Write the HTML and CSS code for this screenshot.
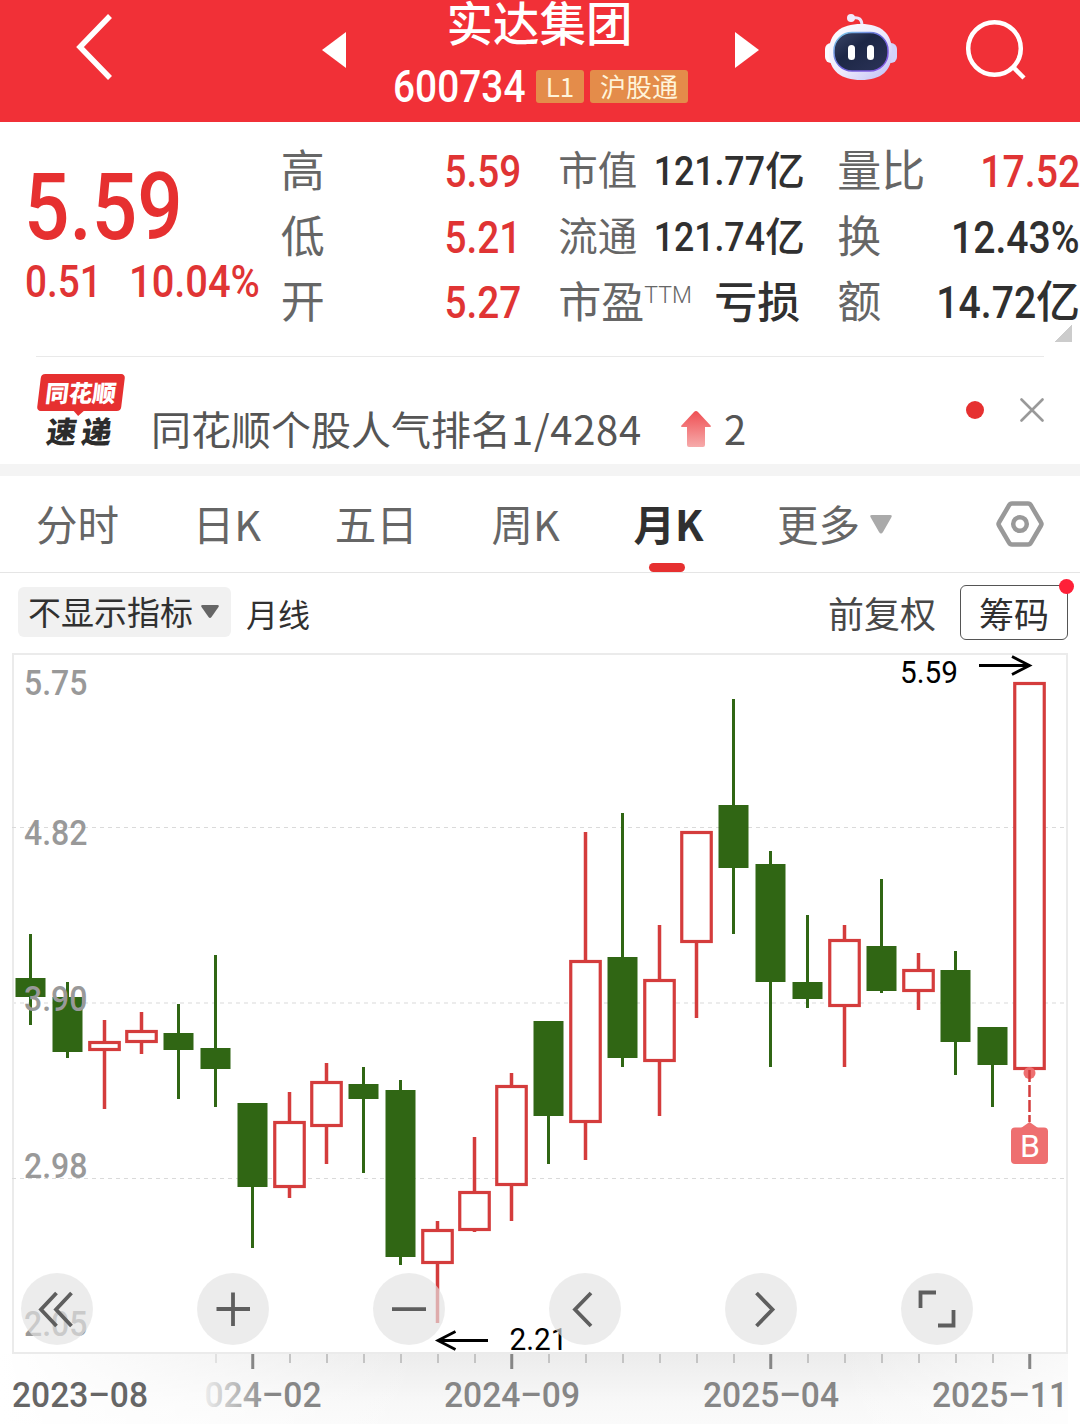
FILE: index.html
```html
<!DOCTYPE html>
<html lang="zh-CN">
<head>
<meta charset="utf-8">
<title>实达集团 600734</title>
<link rel="stylesheet" href="styles.css">
</head>
<body>
<header class="topbar">
  <svg class="back" width="44" height="72" viewBox="0 0 44 72" fill="none" stroke="#fff" stroke-width="5.5"><path d="M38 5 8 36l30 31"/></svg>
  <svg class="prev" width="24" height="36" viewBox="0 0 24 36" fill="#fff"><path d="M24 0v36L0 18z"/></svg>
  <div class="stock">
    <h1>实达集团</h1>
    <div class="code-row">
      <span class="code"><span class="din">600734</span></span>
      <span class="tag tag-l1">L1</span>
      <span class="tag tag-hk">沪股通</span>
    </div>
  </div>
  <svg class="next" width="24" height="36" viewBox="0 0 24 36" fill="#fff"><path d="M0 0v36l24-18z"/></svg>
  <svg class="robot" width="74" height="70" viewBox="824 12 74 70">
    <defs>
      <linearGradient id="shell" x1="0" y1="0" x2="1" y2="1"><stop offset="0" stop-color="#fff"/><stop offset=".55" stop-color="#ece9fc"/><stop offset="1" stop-color="#bcbcf4"/></linearGradient>
      <linearGradient id="rim" x1="0" y1="0" x2="1" y2="1"><stop offset="0" stop-color="#7fd6ec"/><stop offset=".5" stop-color="#6a62d8"/><stop offset="1" stop-color="#8a58e6"/></linearGradient>
      <linearGradient id="visor" x1="0" y1="0" x2="1" y2="1"><stop offset="0" stop-color="#3a4668"/><stop offset=".4" stop-color="#1d2746"/><stop offset="1" stop-color="#2b3358"/></linearGradient>
    </defs>
    <path d="M853 18c6-1 9 1 9 8" fill="none" stroke="#ece4fa" stroke-width="3"/>
    <circle cx="851" cy="18" r="4" fill="#f1eafc"/>
    <rect x="825" y="43" width="12" height="20" rx="6" fill="#fbfaff"/>
    <rect x="885" y="43" width="12" height="20" rx="6" fill="#d3d3fa"/>
    <path d="M861 24c20 0 31 9 31 28s-11 28-31 28-32-9-32-28 12-28 32-28z" fill="url(#shell)"/>
    <rect x="834" y="32.500" width="54" height="38.500" rx="18" fill="url(#visor)" stroke="url(#rim)" stroke-width="1.500"/>
    <rect x="848" y="45" width="7" height="15" rx="3.500" fill="#fff"/>
    <rect x="867" y="45" width="7" height="15" rx="3.500" fill="#fff"/>
  </svg>
  <svg class="search" width="62" height="62" viewBox="964 18 62 62" fill="none" stroke="#fff" stroke-width="4.500"><circle cx="994.500" cy="48.500" r="26.300"/><path d="m1013 67 11 11"/></svg>
</header>

<section class="quote">
  <div class="price">
    <div class="last"><span class="din">5.59</span></div>
    <div class="change"><span class="diff"><span class="din">0.51</span></span><span class="pct"><span class="din">10.04%</span></span></div>
  </div>
  <dl class="stats stats-a">
    <div><dt>高</dt><dd class="up"><span class="din">5.59</span></dd></div>
    <div><dt>低</dt><dd class="up"><span class="din">5.21</span></dd></div>
    <div><dt>开</dt><dd class="up"><span class="din">5.27</span></dd></div>
  </dl>
  <dl class="stats stats-b">
    <div><dt>市值</dt><dd><span class="din">121.77</span>亿</dd></div>
    <div><dt>流通</dt><dd><span class="din">121.74</span>亿</dd></div>
    <div class="pe"><dt>市盈<sup>TTM</sup></dt><dd>亏损</dd></div>
  </dl>
  <dl class="stats stats-c">
    <div><dt>量比</dt><dd class="up"><span class="din">17.52</span></dd></div>
    <div><dt>换</dt><dd><span class="din">12.43%</span></dd></div>
    <div><dt>额</dt><dd><span class="din">14.72</span>亿</dd></div>
  </dl>
  <i class="fold"></i>
</section>

<section class="news">
  <div class="logo">
    <span class="logo-top"><b>同花顺</b></span>
    <span class="logo-bottom">速递</span>
  </div>
  <p>同花顺个股人气排名<span class="place">1/4284</span></p>
  <svg class="rise" width="30" height="36" viewBox="0 0 30 36"><defs><linearGradient id="rise" x2="0" y2="1"><stop stop-color="#ef4f53"/><stop offset="1" stop-color="#f6abab"/></linearGradient></defs><path d="M15 0q1 0 2 1l13 14q0 1-1 1h-5v18q0 2-2 2H8q-2 0-2-2V16H1q-1 0-1-1L13 1q1-1 2-1z" fill="url(#rise)"/></svg>
  <span class="rank">2</span>
  <i class="unread"></i>
  <svg class="close" width="24" height="24" viewBox="0 0 24 24" stroke="#999" stroke-width="2.600" stroke-linecap="round"><path d="m1.500 1.500 21 21m0-21-21 21"/></svg>
</section>

<nav class="tabs">
  <a>分时</a><a>日K</a><a>五日</a><a>周K</a><a class="active">月K</a>
  <a class="more">更多<svg width="22" height="19" viewBox="0 0 22 19" fill="#aaa"><path d="M2 0h18q3 0 1 3l-8 14q-2 3-4 0L1 3q-2-3 1-3z"/></svg></a>
  <svg class="gear" width="48" height="46" viewBox="0 0 48 46" fill="none" stroke="#999"><path d="M16 2.500h16q2 0 3 2l10 17q1 1.500 0 3l-10 17q-1 2-3 2H16q-2 0-3-2L3 24.500q-1-1.500 0-3l10-17q1-2 3-2z" stroke-width="4.500"/><circle cx="24" cy="23" r="6.800" stroke-width="4.500"/></svg>
</nav>

<div class="toolbar">
  <span class="indicator">不显示指标<svg width="18" height="13" viewBox="0 0 18 13" fill="#666"><path d="M1.500 0h15q2 0 1 2l-7 10q-1.500 2-3 0l-7-10q-1-2 1-2z"/></svg></span>
  <span class="period">月线</span>
  <span class="adjust">前复权</span>
  <span class="chips">筹码</span>
</div>

<svg class="chart" width="1080" height="775" viewBox="0 649 1080 775">
  <defs>
    <linearGradient id="axisV" x2="0" y2="1"><stop stop-color="#ececec"/><stop offset=".7" stop-color="#f8f8f8"/><stop offset="1" stop-color="#fafafa"/></linearGradient>
    <linearGradient id="axisL"><stop stop-color="#fff"/><stop offset="1" stop-color="#fff" stop-opacity="0"/></linearGradient>
    <linearGradient id="axisR"><stop stop-color="#fff" stop-opacity="0"/><stop offset="1" stop-color="#fff" stop-opacity=".7"/></linearGradient>
    <linearGradient id="fade" gradientUnits="userSpaceOnUse" x1="200" x2="270" y1="0" y2="0"><stop stop-color="#f4f4f4"/><stop offset="1" stop-color="#868686"/></linearGradient>
  </defs>
  <rect x="0" y="1354" width="1068" height="70" fill="url(#axisV)"/>
  <rect x="0" y="1354" width="420" height="70" fill="url(#axisL)"/>
  <rect x="840" y="1354" width="228" height="70" fill="url(#axisR)"/>
  <rect x="13" y="654" width="1054" height="699" fill="none" stroke="#ebebeb" stroke-width="2"/>
  <g class="grid"><path d="M12 827.500h1055"/><path d="M12 1003h1055" class="soft"/><path d="M12 1178.500h1055"/></g>
  <g id="candles"></g>
  <g class="scale">
    <text x="24" y="695" textLength="63.500">5.75</text>
    <text x="24" y="845" textLength="63.500">4.82</text>
    <text x="24" y="1011" textLength="63.500">3.90</text>
    <text x="24" y="1178" textLength="63.500">2.98</text>
    <text x="24" y="1336" textLength="63.500">2.05</text>
  </g>
  <g class="extreme">
    <text x="900" y="683" textLength="58">5.59</text>
    <path d="M979 665.500h50M1012 656.500l17.500 9-17.500 9"/>
    <text x="509.500" y="1350" textLength="58">2.21</text>
    <path d="M488 1340.500h-49M455.500 1331.500l-17.500 9 17.500 9"/>
  </g>
  <g class="buy">
    <circle cx="1029.500" cy="1073" r="6"/>
    <path class="lead" d="M1029.500 1070v52"/>
    <path d="m1021 1128 8.500-6 8.500 6z"/>
    <rect x="1011" y="1127.500" width="37" height="36.500" rx="4"/>
    <text x="1030" y="1157" text-anchor="middle">B</text>
  </g>
  <g class="controls">
    <circle cx="57" cy="1309" r="36"/><circle cx="233" cy="1309" r="36"/><circle cx="409" cy="1309" r="36"/>
    <circle cx="585" cy="1309" r="36"/><circle cx="761" cy="1309" r="36"/><circle cx="937" cy="1309" r="36"/>
    <path d="M56.500 1293 41 1309.500l15.500 16.500M71.500 1293 56 1309.500l15.500 16.500"/>
    <path d="M216.500 1309h33.500M233 1292.500v33.500"/>
    <path d="M392 1309.200h34"/>
    <path d="M591 1293l-16 16.500 16 16.500"/>
    <path d="M756.500 1293l16 16.500-16 16.500"/>
    <path d="M936 1292.500h-15.500v15.500M938 1325.500h15.500v-15.500"/>
  </g>
  <g id="ticks"></g>
  <g class="dates">
    <text x="12" y="1407" textLength="136" fill="#666">2023–08</text>
    <text x="204.500" y="1407" textLength="117" fill="url(#fade)">024–02</text>
    <text x="444" y="1407" textLength="136">2024–09</text>
    <text x="703" y="1407" textLength="136">2025–04</text>
    <text x="932" y="1407" textLength="136">2025–11</text>
  </g>
</svg>
<script src="chart.js"></script>
</body>
</html>
```
FILE: styles.css
```css
* { box-sizing: border-box; }
body {
  margin: 0;
  width: 1080px;
  height: 1424px;
  overflow: hidden;
  background: #fff;
  color: #303030;
  font-family: Roboto, "Noto Sans CJK SC", sans-serif;
}
h1, p, dl, dd { margin: 0; font-weight: 400; }
svg { display: block; flex: none; }
.din { display: inline-block; font-family: Roboto, sans-serif; font-weight: 500; font-kerning: none; transform: scaleX(.88); transform-origin: right; }

.topbar { display: flex; height: 122px; background: #f13037; color: #fff; }
.back { margin: 11px 0 0 72px; }
.prev { margin: 32px 0 0 206px; }
.stock { width: 390px; height: 122px; display: flex; flex-direction: column; align-items: center; }
.stock h1 { height: 62px; margin-top: -11px; margin-right: 3px; font: 500 46.500px/64px "Noto Sans CJK SC", sans-serif; }
.code-row { display: flex; align-items: center; width: 296px; height: 34px; margin-top: 18px; }
.code { width: 132px; font-size: 43.500px; line-height: 34px; margin-top: 4px; }
.code .din { transform: scaleX(.893); transform-origin: left; }
.tag { height: 33px; border-radius: 3px; background: #e48c4a; color: #fff4da; text-align: center; font: 26px/31px "Noto Sans CJK SC", sans-serif; }
.tag-l1 { width: 48px; margin-left: 11px; }
.tag-hk { width: 98px; margin-left: 6px; }
.next { margin: 32px 0 0 -1px; }
.robot { margin: 12px 0 0 65px; }
.search { margin: 18px 0 0 66px; }

.quote { position: relative; display: flex; height: 234px; padding-top: 13px; }
.up, .price { color: #e03434; }
.price { width: 281px; }
.last { height: 100px; margin: 22px 0 0 24px; font-size: 93px; line-height: 102px; color: #e63030; }
.last .din { transform: scaleX(.86); transform-origin: left; }
.change { display: flex; padding-left: 25px; font-size: 44px; line-height: 50px; }
.change .din { transform-origin: left; }
.diff { width: 104px; }
.pct .din { transform: scaleX(.905); }
.stats > div { display: flex; justify-content: space-between; align-items: baseline; height: 65.500px; line-height: 66px; font-size: 44px; white-space: nowrap; }
.stats dt { color: #666; font-family: "Noto Sans CJK SC", sans-serif; }
.stats dd { font-weight: 500; }
.stats-a { width: 241px; }
.stats-b { width: 243px; margin-left: 37px; }
.stats-b > div { font-size: 39.500px; }
.stats-b dd { margin-right: 5px; }
.stats-b .din { font-size: 41px; transform: scaleX(.87); }
.stats-b .pe { font-size: 43px; }
.stats-b .pe dd { margin-right: 1px; }
.stats-b sup { font: 300 23px/20px Roboto, sans-serif; vertical-align: 15px; }
.stats-c { width: 243px; margin-left: 36px; }
.stats-c .din { transform: scaleX(.89); }
.fold { position: absolute; right: 8px; bottom: 14px; width: 18px; height: 18px; background: linear-gradient(135deg, transparent 50%, #ccc 50%); }

.news { position: relative; display: flex; height: 120px; border-bottom: 12px solid #f4f4f4; }
.news::before { content: ""; position: absolute; left: 36px; right: 36px; top: 0; height: 1px; background: #e9e9e9; }
.logo { width: 89px; margin: 18px 0 0 37px; display: flex; flex-direction: column; font-family: "Noto Sans CJK SC", sans-serif; font-weight: 900; }
.logo-top { position: relative; width: 84px; height: 37px; margin-left: 2px; border-radius: 4px; background: #e63030; color: #fff; transform: skewX(-7deg); text-align: center; font-size: 23.500px; line-height: 37px; }
.logo-top::after { content: ""; position: absolute; left: 36px; top: 36px; border: 6px solid transparent; border-top-color: #e63030; border-bottom: 0; }
.logo-top b { font-weight: 900; }
.logo-bottom { margin: 3px 0 0 10px; color: #2c2c2c; font-size: 30px; line-height: 32px; letter-spacing: 5px; white-space: nowrap; transform: skewX(-8deg); }
.news p, .rank { font: 40px/60px "Noto Sans CJK SC", sans-serif; color: #555; }
.news p { width: 490px; margin: 42px 0 0 25px; white-space: nowrap; }
.place { letter-spacing: .7px; }
.rise { margin: 55px 0 0 40px; }
.rank { margin: 42px 0 0 13px; }
.unread { width: 18px; height: 18px; margin: 45px 0 0 auto; border-radius: 50%; background: #e63030; }
.close { margin: 42px 36px 0 36px; }

.tabs { display: flex; align-items: center; height: 97px; padding: 0 36px; border-bottom: 1px solid #e5e5e5; font: 41.500px/60px "Noto Sans CJK SC", sans-serif; color: #666; }
.tabs a { position: relative; margin: -3px 73.700px 0 0; white-space: nowrap; }
.tabs a.active { color: #303030; font-weight: 700; }
.tabs a.active::after { content: ""; position: absolute; left: 16px; bottom: -19px; width: 36px; height: 9px; border-radius: 5px; background: #e63030; }
.tabs .more { display: flex; align-items: center; gap: 10px; margin-right: auto; }
.more svg { margin-top: 3px; }

.toolbar { display: flex; align-items: center; height: 76px; padding: 0 12px 0 18px; font: 33px/48px "Noto Sans CJK SC", sans-serif; }
.indicator { display: flex; align-items: center; gap: 8px; width: 213px; height: 50px; margin-top: 2px; padding: 0 0 2px 10px; border-radius: 6px; background: #f1f1f1; }
.period { margin: 4px 0 0 15px; font-size: 32px; }
.adjust { margin: 2px 0 0 auto; font-size: 36px; color: #484848; }
.chips { position: relative; width: 108px; height: 55px; margin-left: 24px; margin-top: 3px; border: 1px solid #555; border-radius: 6px; text-align: center; font-size: 35px; line-height: 53px; }
.chips::after { content: ""; position: absolute; right: -7px; top: -7px; width: 15px; height: 15px; border-radius: 50%; background: #ff2038; }

.chart text { font-family: Roboto, sans-serif; font-kerning: none; }
.grid path { stroke: #dadada; stroke-dasharray: 4 4; }
.grid .soft { stroke: #ececec; stroke-width: 2; }
.down { fill: #306614; }
.rise-body { fill: #fff; stroke: #d43c3c; stroke-width: 3.200; }
.wick-up { fill: #d43c3c; }
.scale text { font-size: 35.500px; font-weight: 500; fill: #999; }
.extreme text { font-size: 31px; fill: #000; }
.extreme path { fill: none; stroke: #000; stroke-width: 2.800; }
.buy { fill: #ee6f70; }
.buy .lead { stroke: #d43c3c; stroke-width: 2.500; stroke-dasharray: 12 3; }
.buy text { font-size: 32px; fill: #fff; }
.controls circle { fill: #e2e2e2; fill-opacity: .67; }
.controls path { fill: none; stroke: #5e5e5e; stroke-width: 3.800; }
.dates text { font-size: 35px; font-weight: 500; }
.dates { fill: #868686; }
.tick { fill: #c4c4c4; }
.tick-major { fill: #868686; }
```
FILE: chart.js
```js
// Monthly candles: [direction, high, body top, body bottom, low], in chart units
const candles = [
  ['d', 934, 978, 997, 1025], ['d', 982, 997, 1052, 1058], ['u', 1020, 1041, 1051, 1109],
  ['u', 1012, 1030, 1043, 1054], ['d', 1004, 1033, 1050, 1099], ['d', 955, 1048, 1069, 1107],
  ['d', 1103, 1103, 1187, 1248], ['u', 1092, 1121, 1188, 1198], ['u', 1063, 1081, 1127, 1164],
  ['d', 1067, 1084, 1099, 1173], ['d', 1080, 1090, 1257, 1265], ['u', 1221, 1229, 1264, 1323],
  ['u', 1137, 1191, 1231, 1232], ['u', 1073, 1085, 1186, 1221], ['d', 1021, 1021, 1116, 1164],
  ['u', 832, 960, 1123, 1160], ['d', 813, 957, 1058, 1067], ['u', 925, 979, 1062, 1116],
  ['u', 831, 831, 943, 1018], ['d', 699, 805, 868, 934], ['d', 851, 864, 982, 1067],
  ['d', 915, 982, 999, 1008], ['u', 925, 939, 1007, 1067], ['d', 879, 946, 991, 993],
  ['u', 953, 969, 992, 1010], ['d', 951, 970, 1042, 1075], ['d', 1027, 1027, 1065, 1107],
  ['u', 682, 682, 1070, 1070]
];
const NS = 'http://www.w3.org/2000/svg';
function rect(parent, cls, x, y, w, h) {
  const r = document.createElementNS(NS, 'rect');
  const box = { class: cls, x, y, width: w, height: h };
  for (const k in box) r.setAttribute(k, box[k]);
  parent.appendChild(r);
  return r;
}
const layer = document.getElementById('candles');
const ticks = document.getElementById('ticks');
candles.forEach(([dir, high, top, bottom, low], i) => {
  const c = 30.5 + 37 * i;
  if (dir === 'd') {
    rect(layer, 'down', c - 1.5, high, 3, low - high);
    rect(layer, 'down', c - 15, top, 30, bottom - top);
  } else {
    rect(layer, 'wick-up', c - 1.75, high, 3.5, low - high);
    rect(layer, 'rise-body', c - 14.75, top + 1.5, 29.5, bottom - top - 3);
  }
  if (i >= 5) {
    const major = (i - 6) % 7 === 0;
    const t = rect(ticks, major ? 'tick-major' : 'tick', c - (major ? 1.25 : 0.5), 1354, major ? 3 : 2, major ? 15 : 9);
    if (i === 5) t.setAttribute('opacity', '.4');
  }
});
// Squeeze axis figures to the narrow numeral width
document.querySelectorAll('.chart text[textLength]').forEach(t => t.setAttribute('lengthAdjust', 'spacingAndGlyphs'));
```
